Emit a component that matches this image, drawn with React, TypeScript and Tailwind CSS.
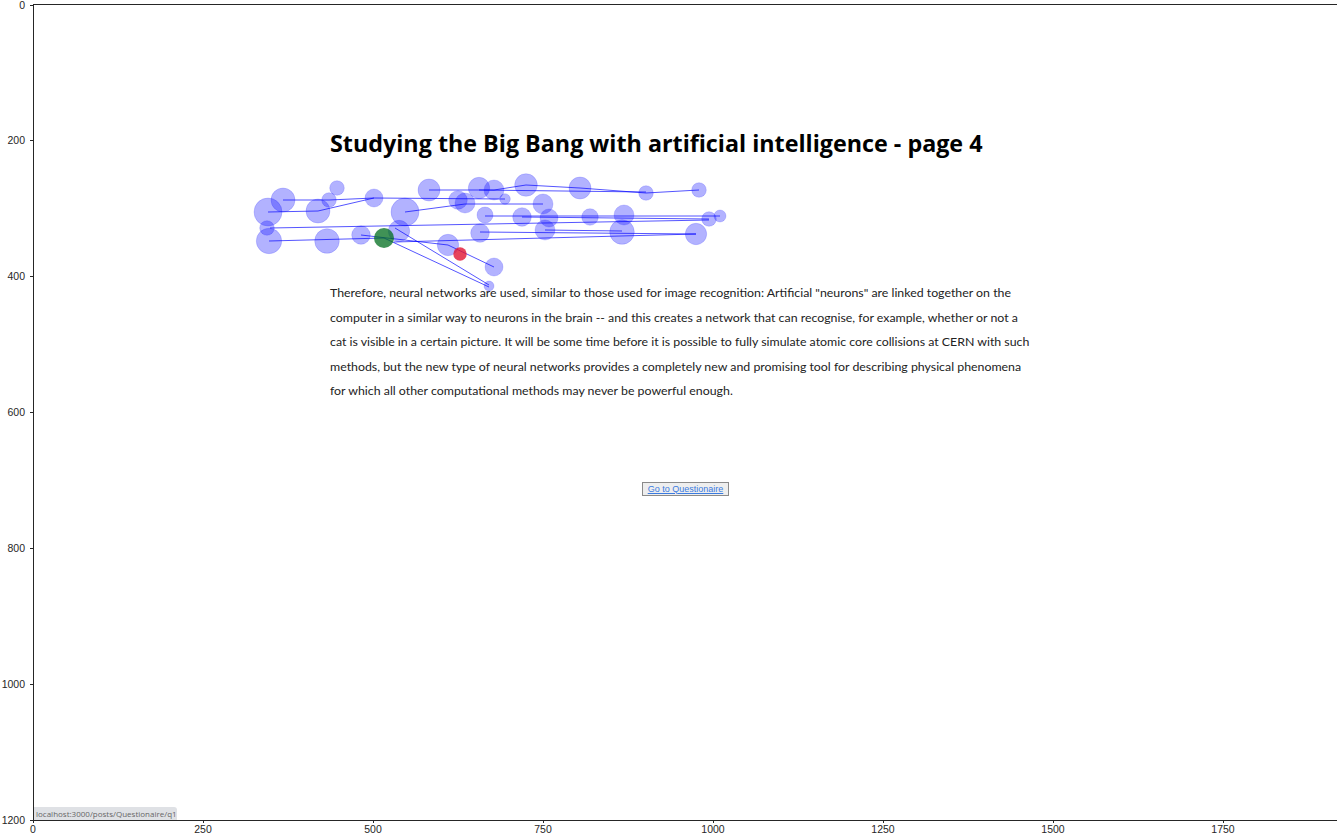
import React from "react";

type Fix = { x: number; y: number; r: number };

const fixations: Fix[] = [
  { x: 283, y: 200, r: 12 },
  { x: 268, y: 212, r: 14 },
  { x: 337, y: 188, r: 7.3 },
  { x: 329, y: 200, r: 7.3 },
  { x: 318, y: 211, r: 12 },
  { x: 374, y: 198, r: 9 },
  { x: 267, y: 228, r: 7.3 },
  { x: 269, y: 241, r: 12.7 },
  { x: 327, y: 241, r: 12.3 },
  { x: 361, y: 235, r: 9.3 },
  { x: 399, y: 231, r: 10.7 },
  { x: 405, y: 212, r: 14 },
  { x: 429, y: 190, r: 11 },
  { x: 458, y: 200, r: 9.3 },
  { x: 465, y: 203, r: 10 },
  { x: 479, y: 188, r: 10.7 },
  { x: 494, y: 190, r: 10 },
  { x: 505, y: 199, r: 5.3 },
  { x: 526, y: 185, r: 11.3 },
  { x: 485, y: 215, r: 8 },
  { x: 480, y: 233, r: 9.3 },
  { x: 448, y: 245, r: 10.7 },
  { x: 494, y: 267, r: 9 },
  { x: 489, y: 286, r: 5 },
  { x: 543, y: 204, r: 10 },
  { x: 522, y: 217, r: 9.3 },
  { x: 549, y: 218, r: 9 },
  { x: 545, y: 230, r: 10 },
  { x: 580, y: 188, r: 11 },
  { x: 590, y: 217, r: 8.3 },
  { x: 624, y: 215, r: 10 },
  { x: 622, y: 232, r: 12.3 },
  { x: 646, y: 193, r: 7.3 },
  { x: 699, y: 190, r: 7.3 },
  { x: 696, y: 234, r: 10.7 },
  { x: 709, y: 219, r: 7.3 },
  { x: 720, y: 216, r: 6 },
];

const segments: [number, number, number, number][] = [
  [283, 200, 329, 200],
  [329, 200, 374, 198],
  [374, 198, 505, 199],
  [268, 212, 318, 211],
  [318, 211, 374, 198],
  [429, 190, 494, 190],
  [494, 190, 526, 185],
  [526, 185, 580, 188],
  [580, 188, 646, 193],
  [646, 193, 699, 190],
  [479, 190, 646, 192],
  [405, 212, 465, 204],
  [465, 204, 543, 204],
  [485, 216, 720, 216],
  [522, 217, 709, 219],
  [270, 228, 709, 220],
  [480, 232, 696, 234],
  [545, 230, 622, 231],
  [269, 241, 384, 238],
  [394, 242, 696, 234],
  [361, 235, 448, 245],
  [448, 245, 494, 267],
  [384, 238, 489, 287],
  [395, 228, 489, 285],
];

const xTicks = [0, 250, 500, 750, 1000, 1250, 1500, 1750];
const yTicks = [0, 200, 400, 600, 800, 1000, 1200];

export default function App() {
  return (
    <div className="relative w-[1337px] h-[836px] overflow-hidden bg-white">
      {/* axes */}
      <div className="ml-[33px] mt-[4px] w-[1306px] h-[817px] border border-[#262626] relative">
        <div className="flex flex-col h-full">
          <div className="pl-[296px] pt-[124px]">
            <h1
              className="text-[23.3px] leading-[28px] font-bold text-black whitespace-nowrap"
              style={{ fontFamily: '"Open Sans", sans-serif' }}
            >
              Studying the Big Bang with artificial intelligence - page 4
            </h1>
            <div
              className="mt-[124px] text-[12.35px] leading-[24.5px] text-[#222] whitespace-nowrap"
              style={{ fontFamily: 'Lato, sans-serif' }}
            >
              <div>Therefore, neural networks are used, similar to those used for image recognition: Artificial "neurons" are linked together on the</div>
              <div>computer in a similar way to neurons in the brain -- and this creates a network that can recognise, for example, whether or not a</div>
              <div>cat is visible in a certain picture. It will be some time before it is possible to fully simulate atomic core collisions at CERN with such</div>
              <div>methods, but the new type of neural networks provides a completely new and promising tool for describing physical phenomena</div>
              <div>for which all other computational methods may never be powerful enough.</div>
            </div>
          </div>
          <div className="flex justify-center mt-[78px] pr-[1px]">
            <button
              className="h-[14px] px-[5px] border border-[#8a8a8a] bg-[#eeeeee] text-[9px] leading-[12px] text-[#3a7be0] underline"
              style={{ fontFamily: '"Liberation Sans", Arial, sans-serif' }}
            >
              Go to Questionaire
            </button>
          </div>
        </div>
        <div
          className="absolute left-0 bottom-0 h-[13px] w-[143px] bg-[#dfe1e5] rounded-tr-[3px] pl-[2px] text-[8px] leading-[13px] text-[#666] whitespace-nowrap"
          style={{ fontFamily: '"Open Sans", sans-serif' }}
        >
          localhost:3000/posts/Questionaire/q1
        </div>
      </div>

      {/* gaze plot overlay */}
      <svg className="absolute inset-0 pointer-events-none" width="1337" height="836" viewBox="0 0 1337 836">
        {fixations.map((f, i) => (
          <circle key={i} cx={f.x} cy={f.y} r={f.r} fill="rgba(0,0,255,0.3)" stroke="rgba(0,0,255,0.15)" strokeWidth={1} />
        ))}
        {segments.map((s, i) => (
          <line key={i} x1={s[0]} y1={s[1]} x2={s[2]} y2={s[3]} stroke="#0000ff" strokeOpacity={0.75} strokeWidth={0.9} />
        ))}
        <circle cx={384} cy={238} r={10} fill="rgba(0,110,30,0.75)" />
        <circle cx={460} cy={254} r={6.7} fill="rgba(225,20,50,0.8)" />
      </svg>

      {/* y ticks */}
      {yTicks.map((t) => {
        const y = 4 + t * 0.68;
        return (
          <div key={t} className="absolute left-0 w-[33px] h-[12px] flex items-center justify-end" style={{ top: Math.max(y - 6, -1) }}>
            <span
              className="text-[10.5px] leading-[12px] text-[#262626] pr-[5px]"
              style={{ fontFamily: '"Liberation Sans", Arial, sans-serif' }}
            >
              {t}
            </span>
            <span className="w-[3px] h-[1px] bg-[#262626]" />
          </div>
        );
      })}

      {/* x ticks */}
      {xTicks.map((t) => {
        const x = 33 + t * 0.68;
        return (
          <div key={t} className="absolute w-[40px] flex flex-col items-center" style={{ left: x - 20, top: 820 }}>
            <span className="w-[1px] h-[3px] bg-[#262626]" />
            <span
              className="text-[10.5px] leading-[12px] text-[#262626]"
              style={{ fontFamily: '"Liberation Sans", Arial, sans-serif' }}
            >
              {t}
            </span>
          </div>
        );
      })}
    </div>
  );
}
